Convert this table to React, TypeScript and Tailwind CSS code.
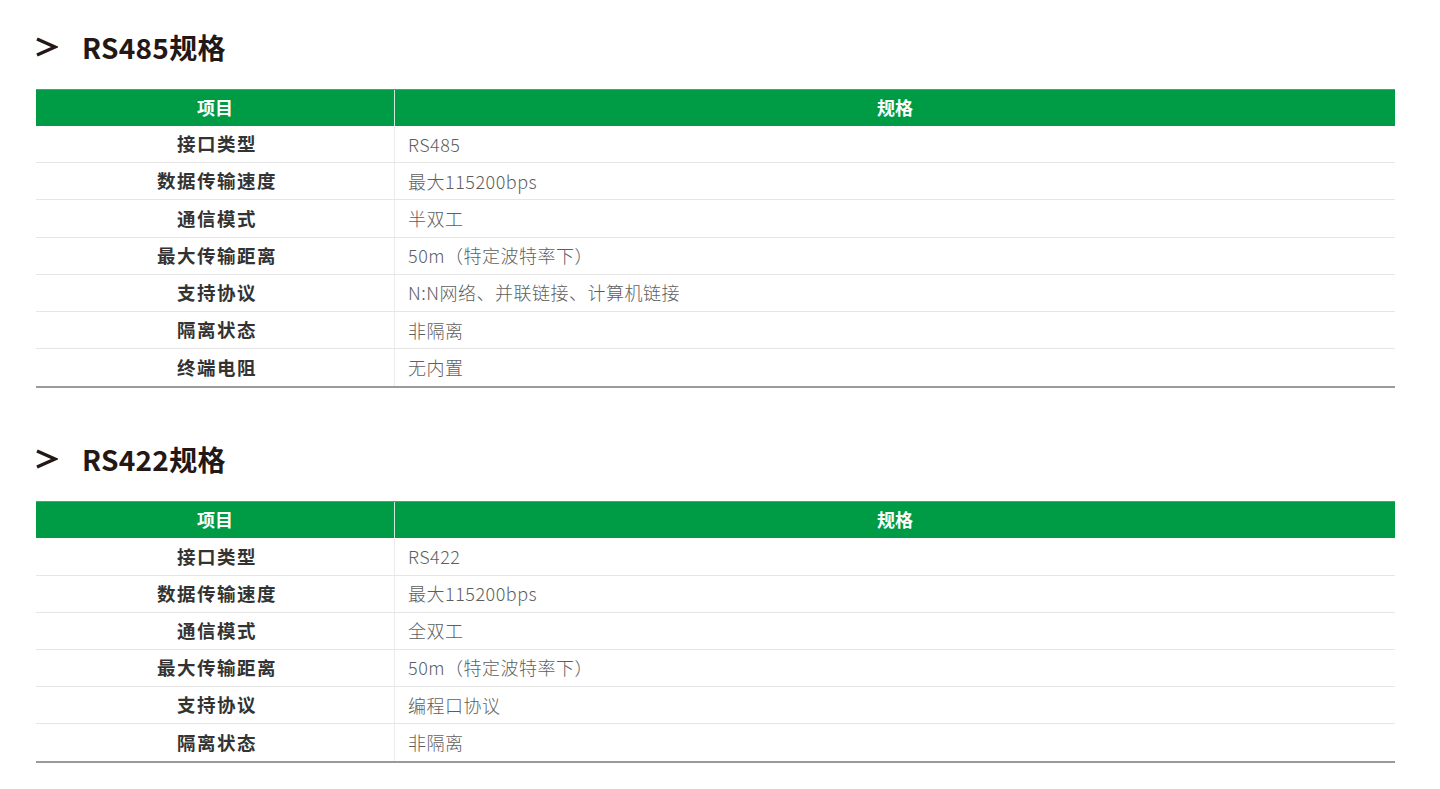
const font = { fontFamily: '"Noto Sans CJK SC", "Noto Sans", sans-serif' };

type Row = [string, string];

const rs485: Row[] = [
  ['接口类型', 'RS485'],
  ['数据传输速度', '最大115200bps'],
  ['通信模式', '半双工'],
  ['最大传输距离', '50m（特定波特率下）'],
  ['支持协议', 'N:N网络、并联链接、计算机链接'],
  ['隔离状态', '非隔离'],
  ['终端电阻', '无内置'],
];

const rs422: Row[] = [
  ['接口类型', 'RS422'],
  ['数据传输速度', '最大115200bps'],
  ['通信模式', '全双工'],
  ['最大传输距离', '50m（特定波特率下）'],
  ['支持协议', '编程口协议'],
  ['隔离状态', '非隔离'],
];

const Chevron = () => (
  <svg width="22" height="20" viewBox="0 0 22 20" fill="none" stroke="#231815" strokeWidth="3.4" strokeLinejoin="miter">
    <polyline points="1,2 19,10 1,18" />
  </svg>
);

const SpecTable = ({ title, rows }: { title: string; rows: Row[] }) => (
  <section>
    <div className="flex items-center h-[38px] mb-[23px]">
      <span className="w-[46px] flex items-center">
        <Chevron />
      </span>
      <h2 className="text-[28px] leading-none font-bold text-[#231815] tracking-[0.3px]">{title}</h2>
    </div>
    <div className="border-b-2 border-[#9a9a9a]">
      <div className="flex h-[37px] bg-[#009b45] border-t border-[#7a8a80] text-white text-[18px] font-bold">
        <div className="w-[359px] flex items-center justify-center border-r border-white/80 pb-[2px]">项目</div>
        <div className="flex-1 flex items-center justify-center pb-[2px]">规格</div>
      </div>
      {rows.map(([k, v], i) => (
        <div
          key={k}
          className={`flex h-[37.2px] ${i < rows.length - 1 ? 'border-b border-[#e6e6e6]' : ''}`}
        >
          <div className="w-[359px] flex items-center justify-center border-r border-[#ececec] text-[18.5px] font-bold text-[#333] tracking-[1.5px] pl-[4px]">
            {k}
          </div>
          <div className="flex-1 flex items-center pl-[13px] text-[18px] font-light text-[#5e5e5e] tracking-[0.5px]">
            {v}
          </div>
        </div>
      ))}
    </div>
  </section>
);

export default function App() {
  return (
    <div className="w-[1440px] min-h-[789px] bg-white px-[36px] pt-[28px] flex flex-col gap-[52px]" style={font}>
      <div className="w-[1359px]">
        <SpecTable title="RS485规格" rows={rs485} />
      </div>
      <div className="w-[1359px]">
        <SpecTable title="RS422规格" rows={rs422} />
      </div>
    </div>
  );
}
